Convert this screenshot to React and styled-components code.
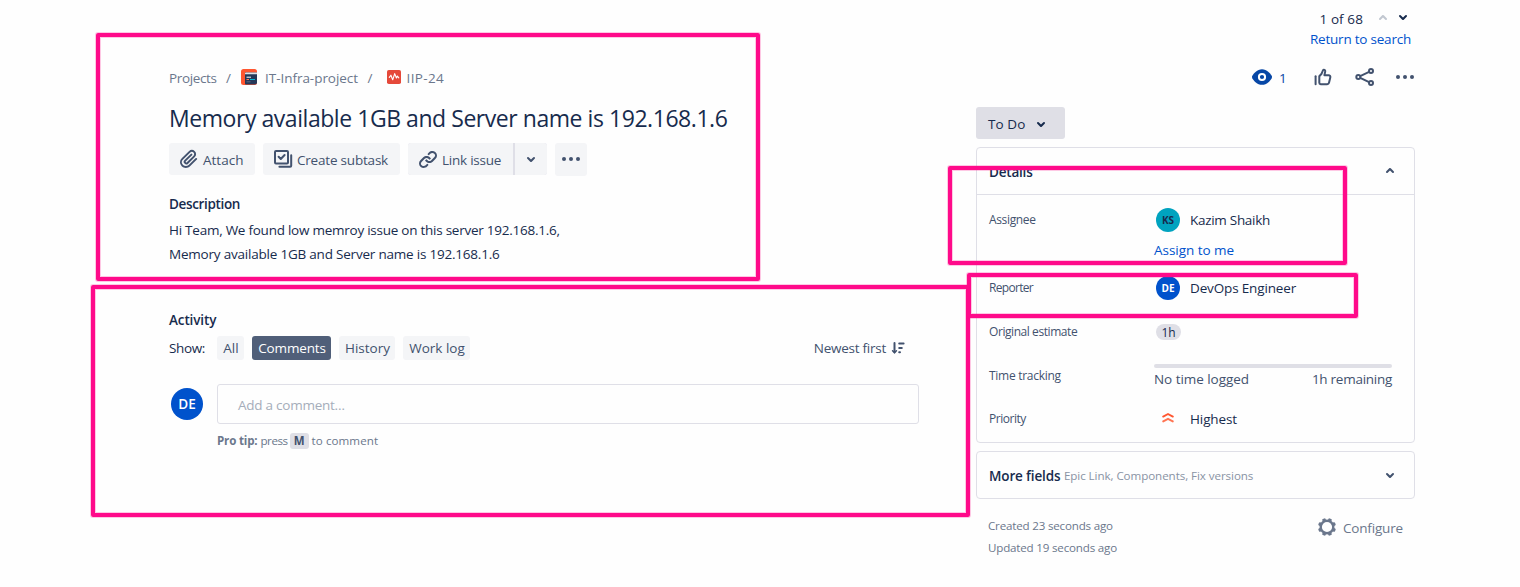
import React from 'react';
import styled, { createGlobalStyle } from 'styled-components';

const Global = createGlobalStyle`
  * { box-sizing: border-box; }
  body {
    margin: 0;
    background: #fefefe;
    color: #172b4d;
    font: 400 13.5px/20px "Open Sans", "Noto Sans", sans-serif;
    overflow: hidden;
  }
`;

const Page = styled.div`
  position: relative;
  display: flex;
  width: 1520px;
  height: 587px;
  padding-left: 169px;
`;

const Text = styled.span`
  font-size: ${(p) => p.$size || 13.5}px;
  font-weight: ${(p) => p.$weight || 400};
  letter-spacing: ${(p) => p.$track || 0}px;
  color: ${(p) => p.$color || 'inherit'};
  padding-top: ${(p) => p.$drop || 0}px;
  white-space: nowrap;
`;

const Main = styled.main`
  width: 750px;
  display: flex;
  flex-direction: column;
  padding-top: 68px;
`;

const Breadcrumbs = styled.nav`
  display: flex;
  align-items: center;
  height: 20px;
  color: #6b778c;
  svg { display: block; flex: none; }
`;

const Slash = styled.span`
  width: 5px;
  margin: 0 ${(p) => p.$after}px 0 9.5px;
`;

const ProjectMark = styled.span`
  margin-right: 8px;
  padding-bottom: 2px;
`;

const IssueMark = styled.span`
  margin-right: 5.5px;
  padding-bottom: 2px;
`;

const Title = styled.h1`
  margin: 16px 0 0;
  font-size: 23px;
  font-weight: 400;
  line-height: 28px;
  letter-spacing: -0.45px;
  white-space: nowrap;
`;

const Toolbar = styled.div`
  display: flex;
  align-items: flex-start;
  gap: 8px;
  height: 33px;
  margin-top: 11px;
`;

const ToolButton = styled.button`
  display: flex;
  align-items: center;
  justify-content: ${(p) => (p.$centered ? 'center' : 'flex-start')};
  gap: 2px;
  width: ${(p) => p.$width}px;
  height: ${(p) => p.$height || 32}px;
  padding: 0 0 ${(p) => p.$lift || 0}px ${(p) => (p.$centered ? 0 : 8)}px;
  border: 0;
  border-radius: ${(p) => p.$radius || '3px'};
  background: #f4f5f7;
  color: #42526e;
  font: inherit;
  svg { display: block; flex: none; }
`;

const SplitButton = styled.div`
  display: flex;
  gap: 2px;
  background: #dfdfe7;
  border-radius: 3px;
`;

const SectionTitle = styled.h2`
  margin: ${(p) => p.$top}px 0 0;
  font-size: 13.5px;
  font-weight: 600;
  line-height: 20px;
  letter-spacing: ${(p) => p.$track}px;
`;

const Paragraph = styled.div`
  display: flex;
  flex-direction: column;
  margin-top: 4px;
  line-height: 24px;
`;

const FilterBar = styled.div`
  display: flex;
  align-items: center;
  gap: 8px;
  height: 24px;
  margin-top: 6px;
`;

const FilterLabel = styled.span`
  width: 40px;
  letter-spacing: -0.36px;
`;

const Chip = styled.button`
  width: ${(p) => p.$width}px;
  height: 24px;
  padding: 0 0 0 1px;
  border: 0;
  border-radius: 3px;
  background: ${(p) => (p.$active ? '#505f79' : '#f4f5f7')};
  color: ${(p) => (p.$active ? '#fff' : '#42526e')};
  font: inherit;
  letter-spacing: ${(p) => p.$track || 0}px;
`;

const SortButton = styled.div`
  display: flex;
  align-items: center;
  gap: 5px;
  margin: 0 14px 0 auto;
  color: #42526e;
`;

const CommentRow = styled.div`
  display: flex;
  align-items: center;
  gap: 14px;
  margin-top: 24px;
  padding-left: 2px;
`;

const Avatar = styled.span`
  flex: none;
  display: flex;
  align-items: center;
  justify-content: center;
  width: ${(p) => p.$size}px;
  height: ${(p) => p.$size}px;
  border-radius: 50%;
  background: ${(p) => p.$bg};
  color: ${(p) => p.$fg};
  font-size: ${(p) => (p.$size > 30 ? 13.5 : 10)}px;
  font-weight: ${(p) => (p.$size > 30 ? 600 : 700)};
`;

const CommentField = styled.div`
  flex: 1;
  height: 40px;
  padding: 10px 20px;
  border: 1px solid #dfdfe7;
  border-radius: 3px;
  color: #a5adba;
  line-height: 20px;
  letter-spacing: -0.25px;
`;

const ProTip = styled.div`
  display: flex;
  align-items: center;
  height: 20px;
  margin: 7px 0 0 48px;
  color: #6b778c;
  font-size: 11.6px;
`;

const Key = styled.kbd`
  width: 19px;
  height: 16px;
  margin: 0 3px 0 2px;
  border-radius: 3px;
  background: #dfdfe6;
  color: #42526e;
  font: 700 11.5px/16px "Open Sans", sans-serif;
  text-align: center;
`;

const Sidebar = styled.aside`
  width: 439px;
  margin-left: 57px;
  padding-top: 9px;
`;

const Pager = styled.div`
  display: flex;
  justify-content: flex-end;
  align-items: center;
  gap: 10px;
  height: 20px;
  padding-right: 2px;
  svg { display: block; }
`;

const PagerArrows = styled.span`
  display: flex;
`;

const PagerArrow = styled.span`
  width: 20px;
  height: 24px;
  display: flex;
  justify-content: center;
  align-items: center;
  color: ${(p) => (p.$muted ? '#c1c7d0' : '#172b4d')};
  padding-bottom: ${(p) => (p.$muted ? 2 : 4)}px;
  svg { flex: none; }
`;

const ReturnLink = styled.div`
  height: 20px;
  padding-right: 4px;
  text-align: right;
`;

const IssueActions = styled.div`
  display: flex;
  justify-content: flex-end;
  align-items: center;
  height: 20px;
  margin: 18px -2px 0 0;
  color: #42526e;
  svg { display: block; }
`;

const WatchCount = styled.span`
  width: 37px;
  padding: 1px 0 0 5px;
  color: #0747a6;
`;

const IconSlot = styled.span`
  width: 24px;
  margin-left: ${(p) => p.$gap || 0}px;
`;

const StatusButton = styled.button`
  display: flex;
  align-items: center;
  width: 89px;
  height: 32px;
  margin-top: 20px;
  padding: 2px 0 0 12px;
  border: 0;
  border-radius: 3px;
  background: #dfdfe6;
  color: #172b4d;
  font: inherit;
  gap: 4px;
`;

const Panel = styled.section`
  margin-top: 8px;
  border: 1px solid #dfdfe7;
  border-radius: 4px;
`;

const PanelHeader = styled.header`
  display: flex;
  align-items: center;
  height: ${(p) => (p.$open ? 47 : 46)}px;
  padding: 0 12px;
  border-bottom: ${(p) => (p.$open ? '1px solid #dfdfe7' : '0')};
  svg { display: block; margin-left: auto; color: #42526e; }
`;

const Fields = styled.div`
  padding: 0 22px 2px 12px;
`;

const Field = styled.div`
  display: grid;
  grid-template-columns: 165px 1fr;
  align-items: ${(p) => (p.$top ? 'start' : 'center')};
  height: ${(p) => p.$height}px;
  padding-top: ${(p) => p.$top || 0}px;
`;

const FieldLabel = styled.span`
  height: 20px;
  margin-top: ${(p) => p.$shift || 0}px;
  color: #42526e;
  font-size: 12px;
  font-weight: 500;
  letter-spacing: ${(p) => p.$track}px;
`;

const Person = styled.div`
  display: flex;
  align-items: center;
  gap: 10px;
  height: 24px;
  padding-left: 2px;
`;

const AssignLink = styled.div`
  margin-top: 8px;
`;

const Estimate = styled.span`
  width: 25px;
  height: 16px;
  margin-left: 2px;
  border-radius: 8px;
  background: #dfdfe6;
  font-size: 12px;
  line-height: 17px;
  text-align: center;
`;

const Tracking = styled.div`
  color: #42526e;
  height: 25px;
`;

const Track = styled.div`
  height: 4px;
  margin-bottom: 1px;
  border-radius: 2px;
  background: #dfdfe6;
`;

const TrackLegend = styled.div`
  display: flex;
  justify-content: space-between;
`;

const Footer = styled.footer`
  display: flex;
  justify-content: space-between;
  margin-top: 16px;
  padding: 0 12px;
  color: #6b778c;
`;

const Dates = styled.div`
  display: flex;
  flex-direction: column;
  line-height: 22px;
`;

const Configure = styled.div`
  display: flex;
  align-items: center;
  gap: 4px;
  height: 24px;
  svg { display: block; }
`;

const Marker = styled.div`
  position: absolute;
  left: ${(p) => p.$x}px;
  top: ${(p) => p.$y}px;
  width: ${(p) => p.$w}px;
  height: ${(p) => p.$h}px;
  border: 4px solid #ff0a8a;
  border-radius: 2px;
  box-shadow: 0 0 0 1px rgba(255, 10, 138, 0.22), inset 0 0 0 1px rgba(255, 10, 138, 0.22);
  pointer-events: none;
`;

const Icon = ({ children, size = 24, box = 24 }) => (
  <svg width={size} height={size} viewBox={`0 0 ${box} ${box}`} fill="none" aria-hidden="true">
    {children}
  </svg>
);

const ChevronDown = () => (
  <Icon>
    <path fill="currentColor" d="M8.292 10.293a1.009 1.009 0 0 0 0 1.419l2.939 2.965c.218.215.5.322.779.322s.556-.107.769-.322l2.93-2.955a1.01 1.01 0 0 0 0-1.419.987.987 0 0 0-1.406 0l-2.298 2.317-2.307-2.327a.99.99 0 0 0-1.406 0z" />
  </Icon>
);

const ChevronUp = () => (
  <Icon>
    <path fill="currentColor" d="M11.221 9.322l-2.929 2.955a1.009 1.009 0 0 0 0 1.419.986.986 0 0 0 1.405 0l2.298-2.317 2.307 2.327a.989.989 0 0 0 1.407 0 1.01 1.01 0 0 0 0-1.419l-2.94-2.965A1.106 1.106 0 0 0 11.991 9c-.279 0-.557.107-.77.322z" />
  </Icon>
);

const MoreIcon = () => (
  <Icon>
    <g fill="currentColor">
      <circle cx="5" cy="12" r="2" />
      <circle cx="12" cy="12" r="2" />
      <circle cx="19" cy="12" r="2" />
    </g>
  </Icon>
);

const AttachIcon = () => (
  <Icon>
    <path fill="currentColor" d="M11.643 17.965c-1.53 1.495-4.016 1.496-5.542.004a3.773 3.773 0 0 1 .002-5.412l7.147-6.985a2.316 2.316 0 0 1 3.233-.003c.893.873.895 2.282.004 3.153l-6.703 6.55a.653.653 0 0 1-.914-.008.62.62 0 0 1 0-.902l6.229-6.087a.941.941 0 0 0 0-1.353.995.995 0 0 0-1.384 0l-6.23 6.087a2.502 2.502 0 0 0 0 3.607 2.643 2.643 0 0 0 3.683.009l6.703-6.55a4.132 4.132 0 0 0-.004-5.859 4.306 4.306 0 0 0-6.002.003l-7.148 6.985a5.655 5.655 0 0 0-.001 8.118c2.29 2.237 6.015 2.238 8.308-.004l6.862-6.705a.943.943 0 0 0 0-1.354.995.995 0 0 0-1.384 0l-6.859 6.706z" />
  </Icon>
);

const SubtaskIcon = () => (
  <Icon>
    <g stroke="currentColor" strokeWidth="2" strokeLinecap="round" strokeLinejoin="round">
      <rect x="4" y="4" width="13" height="12.6" rx="1" />
      <path d="M7.6 9.8l2.2 2.2 3.8-4" />
      <path d="M20.2 8.2v10.6a1 1 0 0 1-1 1H8.4" />
    </g>
  </Icon>
);

const LinkIcon = () => (
  <Icon>
    <path fill="currentColor" d="M12.856 5.457l-.937.92a1.002 1.002 0 0 0 0 1.437 1.047 1.047 0 0 0 1.463 0l.984-.966c.967-.95 2.542-1.135 3.602-.288a2.54 2.54 0 0 1 .203 3.81l-2.903 2.852a2.646 2.646 0 0 1-3.696 0l-1.11-1.09L9 13.57l1.108 1.089c1.822 1.788 4.802 1.788 6.622 0l2.905-2.852a4.558 4.558 0 0 0-.357-6.82c-1.893-1.517-4.695-1.226-6.422.47M11.144 19.543l.937-.92a1.002 1.002 0 0 0 0-1.437 1.047 1.047 0 0 0-1.462 0l-.985.966c-.967.95-2.542 1.135-3.602.288a2.54 2.54 0 0 1-.203-3.81l2.903-2.852a2.646 2.646 0 0 1 3.696 0l1.11 1.09L15 11.43l-1.108-1.089c-1.822-1.788-4.802-1.788-6.622 0l-2.905 2.852a4.558 4.558 0 0 0 .357 6.82c1.893 1.517 4.695 1.226 6.422-.47" />
  </Icon>
);

const WatchIcon = () => (
  <Icon>
    <path fill="#0747a6" d="M12 4.2c4.8 0 8.4 4.2 9.7 6.6.4.8.4 1.6 0 2.4-1.3 2.4-4.9 6.6-9.7 6.6s-8.4-4.2-9.7-6.6c-.4-.8-.4-1.6 0-2.4C3.6 8.4 7.2 4.2 12 4.2z" />
    <circle cx="12" cy="12" r="3.1" stroke="#fff" strokeWidth="2" />
  </Icon>
);

const LikeIcon = () => (
  <Icon>
    <g stroke="currentColor" strokeWidth="2" strokeLinecap="round" strokeLinejoin="round">
      <path d="M4.6 11.2v8" />
      <path d="M8.3 11.2v6.6c0 .8.6 1.4 1.4 1.4h6.5c.9 0 1.6-.6 1.8-1.4l1.3-5.4c.3-1.2-.5-2.2-1.7-2.2h-4.2l.8-3.6c.2-1-.4-1.9-1.3-1.9-.5 0-.8.3-1 .8L10.6 8.7z" />
    </g>
  </Icon>
);

const ShareIcon = () => (
  <Icon>
    <g stroke="currentColor" strokeWidth="2">
      <circle cx="5.3" cy="12" r="2" />
      <circle cx="18" cy="6" r="2" />
      <circle cx="18" cy="18" r="2" />
      <path d="M7.2 11.1l8.9-4.2M7.2 12.9l8.9 4.2" />
    </g>
  </Icon>
);

const GearIcon = () => (
  <Icon>
    <circle cx="12" cy="12" r="6.3" stroke="currentColor" strokeWidth="2.4" />
    <g fill="currentColor">
      {[22.5, 67.5, 112.5, 157.5, 202.5, 247.5, 292.5, 337.5].map((a) => (
        <rect key={a} x="10.2" y="3" width="3.6" height="3.4" rx="1" transform={`rotate(${a} 12 12)`} />
      ))}
    </g>
  </Icon>
);

const SortIcon = () => (
  <Icon size={14} box={14}>
    <g stroke="currentColor" strokeWidth="2" strokeLinecap="round">
      <path d="M3.5 2v9" />
      <path d="M1.6 9.8l1.9 2 1.9-2" strokeWidth="1.6" strokeLinejoin="round" />
      <path d="M8.2 2.5h4.4M8.2 6.9h2.6M8.2 11.3h.8" />
    </g>
  </Icon>
);

const ProjectIcon = () => (
  <Icon size={16} box={16}>
    <rect width="16" height="16" rx="2.5" fill="#ff5630" />
    <path fill="#253858" d="M4 3.5h12v10a2 2 0 0 1-2 2H4.8a.8.8 0 0 1-.8-.8z" />
    <path fill="#dfe1e6" d="M4 4.3c0-.5.3-.8.8-.8H16v1.7H4z" />
    <path stroke="#fff" strokeWidth="1" d="M5.5 8.2h4.5" />
    <path stroke="#00b8d9" strokeWidth="1" d="M9 10.5h5" />
    <path stroke="#ff7452" strokeWidth="1" d="M5.5 10.5h2.5" />
    <path stroke="#5e6c84" strokeWidth="1" d="M5.5 12.8h4" />
  </Icon>
);

const IncidentIcon = () => (
  <Icon size={14} box={14}>
    <rect width="14" height="14" rx="1.8" fill="#e5493a" />
    <path stroke="#fff" strokeWidth="1.1" strokeLinecap="round" strokeLinejoin="round" d="M2.3 7.4L3.9 5.2l1.8 4.6 2-6.2 1.7 4.4 1-2 1.4 1.8" />
  </Icon>
);

const HighestIcon = () => (
  <Icon size={12} box={12}>
    <g strokeWidth="1.9" strokeLinecap="round" strokeLinejoin="round">
      <path stroke="#ff5630" d="M1.2 4.6L6 2l4.8 2.6" />
      <path stroke="#ff7452" d="M1.2 9.4L6 6.8l4.8 2.6" />
    </g>
  </Icon>
);

const PrioritySlot = styled.span`
  width: 24px;
  height: 14px;
  display: flex;
  justify-content: center;
`;

const FILTERS = [
  { label: 'All', width: 27 },
  { label: 'Comments', width: 79, track: -0.15, active: true },
  { label: 'History', width: 56 },
  { label: 'Work log', width: 67 },
];

const MARKERS = [
  [96, 33, 664, 248],
  [91, 285, 879, 232],
  [948, 166, 399, 99],
  [967, 273, 391, 45],
];

export default function App() {
  return (
    <>
      <Global />
      <Page>
        <Main>
          <Breadcrumbs>
            <Text $track={-0.37}>Projects</Text>
            <Slash $after={10}>/</Slash>
            <ProjectMark><ProjectIcon /></ProjectMark>
            <Text $track={-0.04}>IT-Infra-project</Text>
            <Slash $after={14.5}>/</Slash>
            <IssueMark><IncidentIcon /></IssueMark>
            <Text $track={0.35}>IIP-24</Text>
          </Breadcrumbs>
          <Title>Memory available 1GB and Server name is 192.168.1.6</Title>
          <Toolbar>
            <ToolButton $width={86}><AttachIcon /><Text $drop={2}>Attach</Text></ToolButton>
            <ToolButton $width={137}><SubtaskIcon /><Text $drop={2} $track={-0.2}>Create subtask</Text></ToolButton>
            <SplitButton>
              <ToolButton $width={105} $radius="3px 0 0 3px"><LinkIcon /><Text $drop={2} $track={-0.24}>Link issue</Text></ToolButton>
              <ToolButton $width={32} $radius="0 3px 3px 0" $centered><ChevronDown /></ToolButton>
            </SplitButton>
            <ToolButton $width={32} $height={33} $lift={1} $centered><MoreIcon /></ToolButton>
          </Toolbar>
          <SectionTitle $top={18} $track={-0.35}>Description</SectionTitle>
          <Paragraph>
            <Text $track={-0.25}>Hi Team, We found low memroy issue on this server 192.168.1.6,</Text>
            <Text $track={-0.21}>Memory available 1GB and Server name is 192.168.1.6</Text>
          </Paragraph>
          <SectionTitle $top={44} $track={-0.12}>Activity</SectionTitle>
          <FilterBar>
            <FilterLabel>Show:</FilterLabel>
            {FILTERS.map((f) => (
              <Chip key={f.label} $width={f.width} $track={f.track} $active={f.active}>{f.label}</Chip>
            ))}
            <SortButton><Text $track={-0.26}>Newest first</Text><SortIcon /></SortButton>
          </FilterBar>
          <CommentRow>
            <Avatar $size={32} $bg="#0052cc" $fg="#fff">DE</Avatar>
            <CommentField>Add a comment…</CommentField>
          </CommentRow>
          <ProTip>
            <Text $size={11.6} $weight={700} $track={-0.19}>Pro tip:</Text>
            &nbsp;
            <Text $size={11.6} $track={-0.45}>press</Text>
            <Key>M</Key>
            <Text $size={11.6} $track={0.06}>to comment</Text>
          </ProTip>
        </Main>

        <Sidebar>
          <Pager>
            <Text $track={0.1}>1 of 68</Text>
            <PagerArrows>
              <PagerArrow $muted><ChevronUp /></PagerArrow>
              <PagerArrow><ChevronDown /></PagerArrow>
            </PagerArrows>
          </Pager>
          <ReturnLink><Text $track={-0.22} $color="#0052cc">Return to search</Text></ReturnLink>
          <IssueActions>
            <WatchIcon />
            <WatchCount>1</WatchCount>
            <LikeIcon />
            <IconSlot $gap={18}><ShareIcon /></IconSlot>
            <IconSlot $gap={16}><MoreIcon /></IconSlot>
          </IssueActions>
          <StatusButton><Text $weight={500} $track={0.1}>To Do</Text><ChevronDown /></StatusButton>

          <Panel>
            <PanelHeader $open><Text $drop={2} $weight={600} $track={-0.2}>Details</Text><ChevronUp /></PanelHeader>
            <Fields>
              <Field $height={71} $top={13}>
                <FieldLabel $track={-0.35} $shift={2}>Assignee</FieldLabel>
                <div>
                  <Person>
                    <Avatar $size={24} $bg="#00a3bf" $fg="#172b4d">KS</Avatar>
                    <Text $track={-0.29}>Kazim Shaikh</Text>
                  </Person>
                  <AssignLink><Text $track={-0.03} $color="#0052cc">Assign to me</Text></AssignLink>
                </div>
              </Field>
              <Field $height={44}>
                <FieldLabel $track={-0.69}>Reporter</FieldLabel>
                <Person>
                  <Avatar $size={24} $bg="#0052cc" $fg="#fff">DE</Avatar>
                  <Text $track={-0.15}>DevOps Engineer</Text>
                </Person>
              </Field>
              <Field $height={44}>
                <FieldLabel $track={-0.43}>Original estimate</FieldLabel>
                <Estimate>1h</Estimate>
              </Field>
              <Field $height={44}>
                <FieldLabel $track={-0.28}>Time tracking</FieldLabel>
                <Tracking>
                  <Track />
                  <TrackLegend>
                    <Text $track={-0.05}>No time logged</Text>
                    <Text $track={-0.27}>1h remaining</Text>
                  </TrackLegend>
                </Tracking>
              </Field>
              <Field $height={42}>
                <FieldLabel $track={-0.46}>Priority</FieldLabel>
                <Person>
                  <PrioritySlot><HighestIcon /></PrioritySlot>
                  <Text $track={-0.11}>Highest</Text>
                </Person>
              </Field>
            </Fields>
          </Panel>

          <Panel>
            <PanelHeader>
              <Text $drop={2} $weight={600} $track={-0.14}>More fields</Text>
              &nbsp;
              <Text $drop={2} $size={11.6} $track={-0.07} $color="#8993a4">Epic Link, Components, Fix versions</Text>
              <ChevronDown />
            </PanelHeader>
          </Panel>

          <Footer>
            <Dates>
              <Text $size={11.6} $track={-0.19}>Created 23 seconds ago</Text>
              <Text $size={11.6} $track={-0.19}>Updated 19 seconds ago</Text>
            </Dates>
            <Configure><GearIcon /><Text $drop={2} $track={-0.16}>Configure</Text></Configure>
          </Footer>
        </Sidebar>

        {MARKERS.map(([x, y, w, h]) => (
          <Marker key={`${x}-${y}`} $x={x} $y={y} $w={w} $h={h} />
        ))}
      </Page>
    </>
  );
}
